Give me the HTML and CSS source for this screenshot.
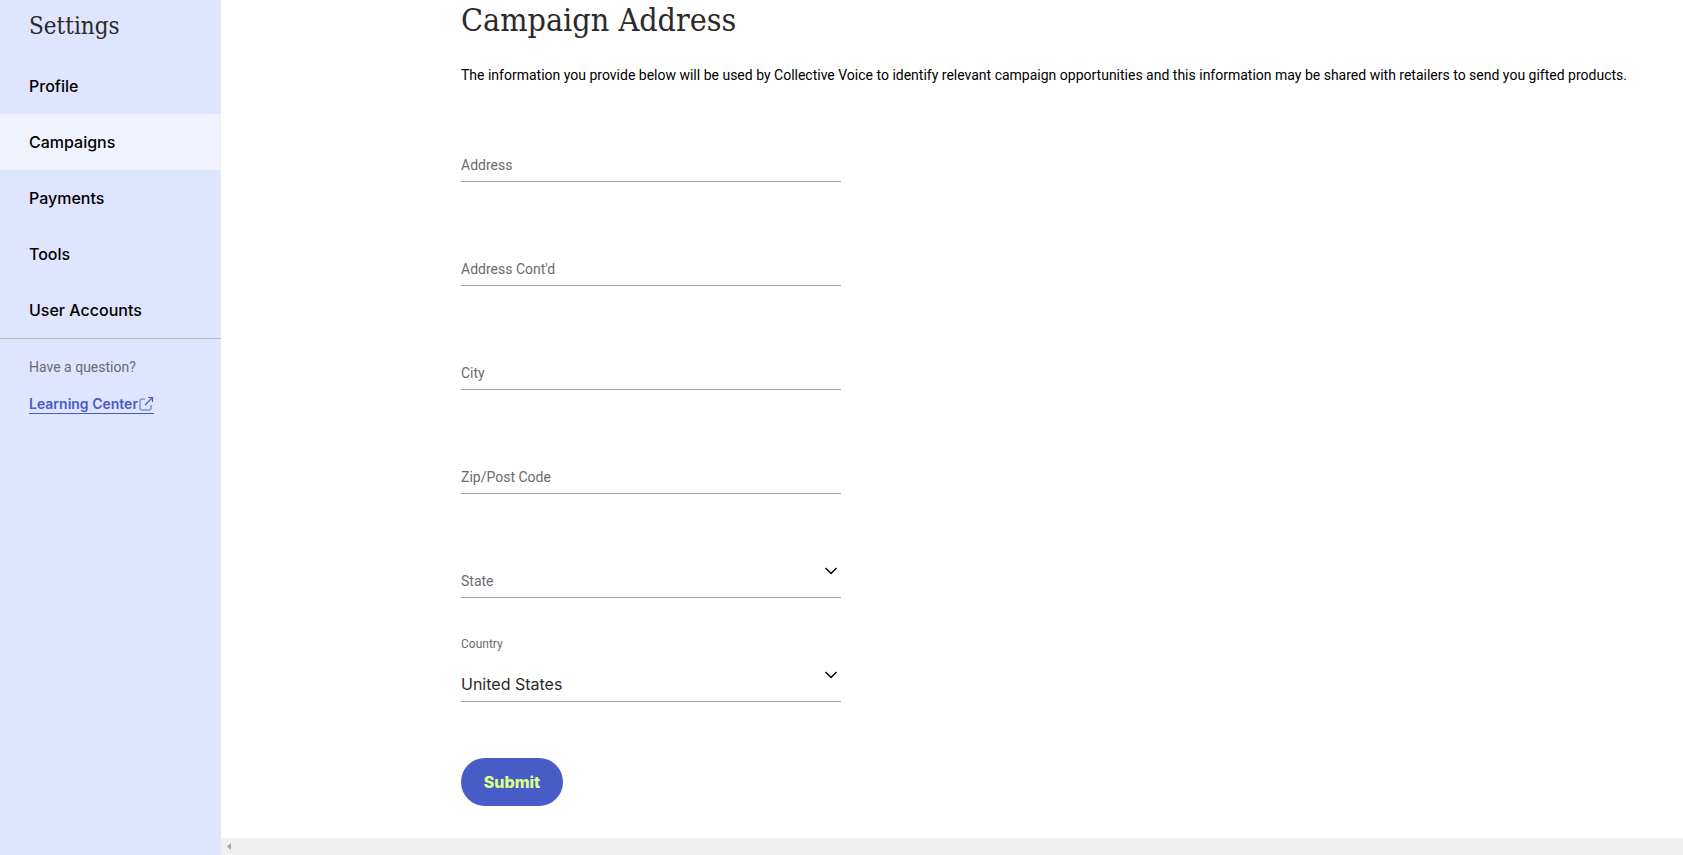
FILE: index.html
```
<!DOCTYPE html>
<html lang="en">
<head>
  <meta charset="UTF-8">
  <meta name="viewport" content="width=device-width, initial-scale=1.0">
  <title>Settings - Campaign Address</title>
  <link rel="stylesheet" href="styles.css">
</head>
<body>

  <!-- Sidebar -->
  <aside class="sidebar">
    <h2>Settings</h2>
    <nav class="menu">
      <a href="#profile">Profile</a>
      <a href="#campaigns" class="active">Campaigns</a>
      <a href="#payments">Payments</a>
      <a href="#tools">Tools</a>
      <a href="#users">User Accounts</a>
    </nav>
    <div class="help">
      <p>Have a question?</p>
      <a href="#learning-center">Learning Center<svg width="16" height="16" viewBox="0 0 16 16" fill="none" stroke="currentColor">
          <path d="M7 3H4Q2 3 2 5V12Q2 14 4 14H11Q13 14 13 12V9" stroke-width="1.5" opacity=".6"/>
          <path d="M7 9L14.5 1.5M10 1.5H14.5V6" stroke-width="1.2"/>
        </svg></a>
    </div>
  </aside>

  <div class="page">
    <main class="content">
      <h1>Campaign Address</h1>
      <p class="intro">The information you provide below will be used by Collective Voice to identify relevant campaign opportunities and this information may be shared with retailers to send you gifted products.</p>

      <form class="address-form">
        <div class="field">
          <label for="address">Address</label>
          <input type="text" id="address">
        </div>
        <div class="field">
          <label for="address2">Address Cont'd</label>
          <input type="text" id="address2">
        </div>
        <div class="field">
          <label for="city">City</label>
          <input type="text" id="city">
        </div>
        <div class="field">
          <label for="zip">Zip/Post Code</label>
          <input type="text" id="zip">
        </div>
        <div class="field">
          <label for="state">State</label>
          <select id="state">
            <option value=""></option>
          </select>
          <svg class="chevron" width="12" height="8" viewBox="0 0 12 8"><path d="M0.5 1L6 6.5L11.5 1"/></svg>
        </div>
        <div class="field filled">
          <label for="country">Country</label>
          <select id="country">
            <option>United States</option>
          </select>
          <svg class="chevron" width="12" height="8" viewBox="0 0 12 8"><path d="M0.5 1L6 6.5L11.5 1"/></svg>
        </div>
        <button type="submit" class="btn">Submit</button>
      </form>
    </main>

    <!-- Horizontal scroll track -->
    <div class="scroll-track">
      <svg width="4" height="7" viewBox="0 0 4 7"><path d="M4 0V7L0 3.5Z"/></svg>
    </div>
  </div>

</body>
</html>
```
FILE: styles.css
```
* {
  box-sizing: border-box;
}

body {
  margin: 0;
  display: flex;
  height: 100vh;
  overflow: hidden;
  background: #ffffff;
  color: #000000;
  font-family: Roboto, 'Liberation Sans', sans-serif;
  font-size: 14px;
}

h1, h2 {
  margin: 0;
  font-family: 'DejaVu Serif Condensed', 'DejaVu Serif', serif;
  font-weight: normal;
  color: #2c2a29;
}

/* Sidebar */
.sidebar {
  flex: 0 0 221px;
  background: #dfe4ff;
}

.sidebar h2 {
  padding: 8px 29px 14px;
  font-size: 24px;
  line-height: 36px;
}

.menu {
  border-bottom: 1px solid #bbbcbc;
}

.menu a {
  display: block;
  padding: 0 29px;
  line-height: 56px;
  font-family: Inter, sans-serif;
  font-size: 16px;
  font-weight: 500;
  color: #000000;
  text-decoration: none;
}

.menu a.active {
  background: #f0f2ff;
}

.help {
  padding: 16px 29px;
}

.help p {
  margin: 0 0 16px;
  line-height: 24px;
  color: #6b6b6b;
}

.help a {
  display: inline-flex;
  align-items: center;
  line-height: 18px;
  border-bottom: 1px solid #485cc7;
  color: #485cc7;
  font-family: Inter, sans-serif;
  font-weight: 600;
  text-decoration: none;
}

/* Content */
.page {
  flex: 1;
  min-width: 0;
  display: flex;
  flex-direction: column;
}

.content {
  flex: 1;
  min-height: 0;
  padding-left: 240px;
  overflow: hidden;
}

h1 {
  font-size: 32px;
  line-height: 40px;
}

.intro {
  margin: 26px 0;
  line-height: 18px;
  white-space: nowrap;
}

.address-form {
  display: flex;
  flex-direction: column;
  align-items: flex-start;
  gap: 32px;
  width: 380px;
}

/* Label and control share one cell so the label rests on the line */
.field {
  display: grid;
  width: 100%;
  height: 72px;
  align-items: end;
}

.field label,
.field input,
.field select,
.chevron {
  grid-area: 1 / 1;
}

.field label {
  justify-self: start;
  margin-bottom: 7px;
  line-height: 20px;
  color: #6b6b6b;
  pointer-events: none;
}

.field input,
.field select {
  width: 100%;
  height: 36px;
  padding: 0;
  border: none;
  border-bottom: 1px solid #a7a8aa;
  border-radius: 0;
  background: transparent;
  color: #2c2a29;
  font-family: Inter, sans-serif;
  font-size: 16px;
  appearance: none;
  outline: none;
}

.field.filled label {
  margin-bottom: 48px;
  font-size: 12px;
}

.chevron {
  justify-self: end;
  margin: 0 4px 23px 0;
  fill: none;
  stroke: #000000;
  stroke-width: 1.5;
  pointer-events: none;
}

.btn {
  margin-top: 24px;
  width: 102px;
  height: 48px;
  padding: 0;
  border: none;
  border-radius: 24px;
  background: #485cc7;
  color: #dcff85;
  font-family: Inter, sans-serif;
  font-size: 16px;
  font-weight: 800;
  cursor: pointer;
}

.scroll-track {
  display: flex;
  align-items: center;
  height: 17px;
  padding-left: 6px;
  background: #f0f0f0;
}

.scroll-track svg {
  fill: #a3a3a3;
}
```
